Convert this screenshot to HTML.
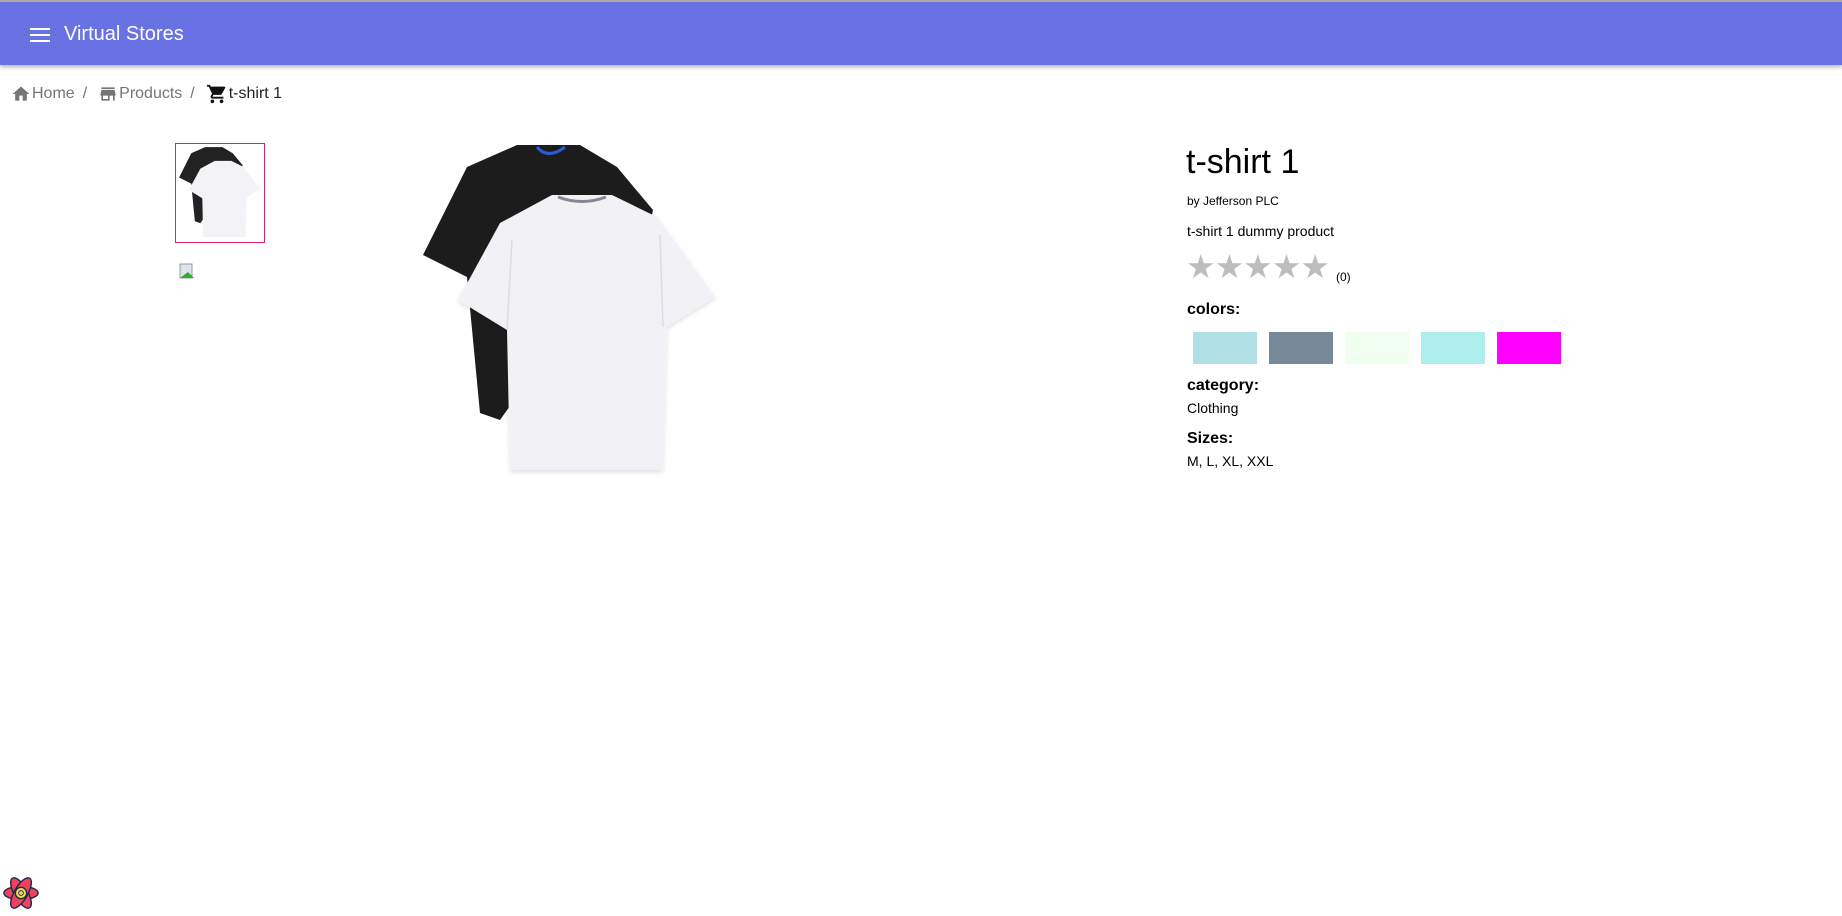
<!DOCTYPE html>
<html><head><meta charset="utf-8"><style>
*{margin:0;padding:0;box-sizing:border-box}
body{width:1842px;height:916px;background:#fff;font-family:"Liberation Sans",sans-serif;position:relative;overflow:hidden}
.hdr{position:absolute;left:0;top:0;width:1842px;height:65px;background:#6872e3;border-top:2px solid #aaa;box-shadow:0 2px 4px rgba(0,0,0,.3)}
.hdr .t{position:absolute;left:64px;top:21px;color:#fff;font-size:20px;font-weight:500}
.bc{position:absolute;top:83px;left:10px;font-size:16px;color:#757575;display:flex;align-items:center}
.bc span{margin:0 4px}
.a{position:absolute;color:#000}
.sw{position:absolute;top:332px;width:64px;height:32px}
</style></head><body>
<div class="hdr">
<svg style="position:absolute;left:30px;top:26px" width="20" height="14"><rect y="0" width="20" height="2" fill="#fff"/><rect y="6" width="20" height="2" fill="#fff"/><rect y="12" width="20" height="2" fill="#fff"/></svg>
<div class="t">Virtual Stores</div></div>
<div class="bc">
<svg width="22" height="20" viewBox="0 0 24 24"><path d="M10 20v-6h4v6h5v-8h3L12 3 2 12h3v8z" fill="#757575"/></svg><span style="margin-left:0">Home</span><span>/</span>
<svg width="22" height="20" viewBox="0 0 24 24" style="margin-left:6px"><path d="M20 4H4v2h16V4zm1 10v-2l-1-5H4l-1 5v2h1v6h10v-6h4v6h2v-6h1zm-9 4H6v-4h6v4z" fill="#757575"/></svg><span style="margin-left:0">Products</span><span>/</span>
<svg width="24" height="22" viewBox="0 0 24 24" style="margin-left:6px"><path d="M7 18c-1.1 0-2 .9-2 2s.9 2 2 2 2-.9 2-2-.9-2-2-2zM1 2v2h2l3.6 7.6-1.35 2.45c-.16.28-.25.61-.25.95 0 1.1.9 2 2 2h12v-2H7.42c-.14 0-.25-.11-.25-.25l.03-.12.9-1.630h7.45c.75 0 1.41-.41 1.75-1.03l3.58-6.49A1 1 0 0020 4H5.21l-.94-2H1zm16 16c-1.1 0-2 .9-2 2s.9 2 2 2 2-.9 2-2-.9-2-2-2z" fill="#111"/></svg><span style="margin-left:0;color:#222">t-shirt 1</span>
</div>
<div style="position:absolute;left:175px;top:143px;width:90px;height:100px;border:1px solid #e0245e"></div>
<svg style="position:absolute;left:178px;top:146px" width="84" height="94" viewBox="421 141 300 340">
<path d="M517 145 L580 145 L617 167 L653 210 L640 260 L600 280 L500 420 L480 413 L467 277 L423 255 L467 167 Z" fill="#222"/>
<path d="M552 195 L612 195 L657 217 L715 297 L667 327 L663 470 L510 470 L507 330 L458 300 L500 223 Z" fill="#f3f3f7"/></svg>
<svg style="position:absolute;left:179px;top:263px" width="16" height="16"><rect x="1" y="1" width="12" height="14" fill="#dde4ec" stroke="#999" stroke-width="1"/><path d="M1 15 L9 9 L15 15Z" fill="#3a3"/></svg>
<svg style="position:absolute;left:0;top:0" width="1842" height="916">
<defs><filter id="sh" x="-10%" y="-10%" width="120%" height="120%"><feDropShadow dx="0" dy="2" stdDeviation="2" flood-color="#000" flood-opacity=".12"/></filter></defs>
<path d="M517 145 L580 145 L617 167 L653 210 L645 250 L600 280 L500 420 L480 413 L467 277 L423 255 L467 167 Z" fill="#1c1c1c"/>
<path d="M537 147 Q548 160 565 147" stroke="#2a5bd0" stroke-width="3" fill="none"/>
<path d="M552 195 L612 195 L657 217 L715 297 L667 327 L663 470 L510 470 L507 330 L458 300 L500 223 Z" fill="#f1f1f6" filter="url(#sh)"/>
<path d="M558 197 Q582 206 606 197" stroke="#8a8590" stroke-width="3" fill="none"/>
<path d="M507 330 L512 240 M663 327 L660 235" stroke="#dcdce4" stroke-width="1.5" fill="none"/>
</svg>
<div class="a" style="left:1186px;top:143px;font-size:34px">t-shirt 1</div>
<div class="a" style="left:1187px;top:194px;font-size:12px">by Jefferson PLC</div>
<div class="a" style="left:1187px;top:223px;font-size:14px">t-shirt 1 dummy product</div>
<div class="a" style="left:1186px;top:247px;font-size:33px;color:#bdbdbd;letter-spacing:-1px">★★★★★</div>
<div class="a" style="left:1336px;top:270px;font-size:12px">(0)</div>
<div class="a" style="left:1187px;top:301px;font-size:16px;font-weight:bold">colors:</div>
<div class="sw" style="left:1193px;background:#b0e0e6"></div>
<div class="sw" style="left:1269px;background:#778899"></div>
<div class="sw" style="left:1345px;background:#f0fff0"></div>
<div class="sw" style="left:1421px;background:#afeeee"></div>
<div class="sw" style="left:1497px;background:#ff00ff"></div>
<div class="a" style="left:1187px;top:377px;font-size:16px;font-weight:bold">category:</div>
<div class="a" style="left:1187px;top:400px;font-size:14px">Clothing</div>
<div class="a" style="left:1187px;top:430px;font-size:16px;font-weight:bold">Sizes:</div>
<div class="a" style="left:1187px;top:453px;font-size:14px">M, L, XL, XXL</div>
<svg style="position:absolute;left:2px;top:874px" width="38" height="38" viewBox="-20 -20 40 40">
<g fill="#f0415e" stroke="#1d2b4a" stroke-width="1.5"><ellipse rx="18" ry="7"/><ellipse rx="18" ry="7" transform="rotate(60)"/><ellipse rx="18" ry="7" transform="rotate(-60)"/></g>
<circle r="6" fill="#f5d949" stroke="#1d2b4a" stroke-width="1.5"/><circle r="2.5" fill="none" stroke="#1d2b4a"/></svg>
</body></html>
